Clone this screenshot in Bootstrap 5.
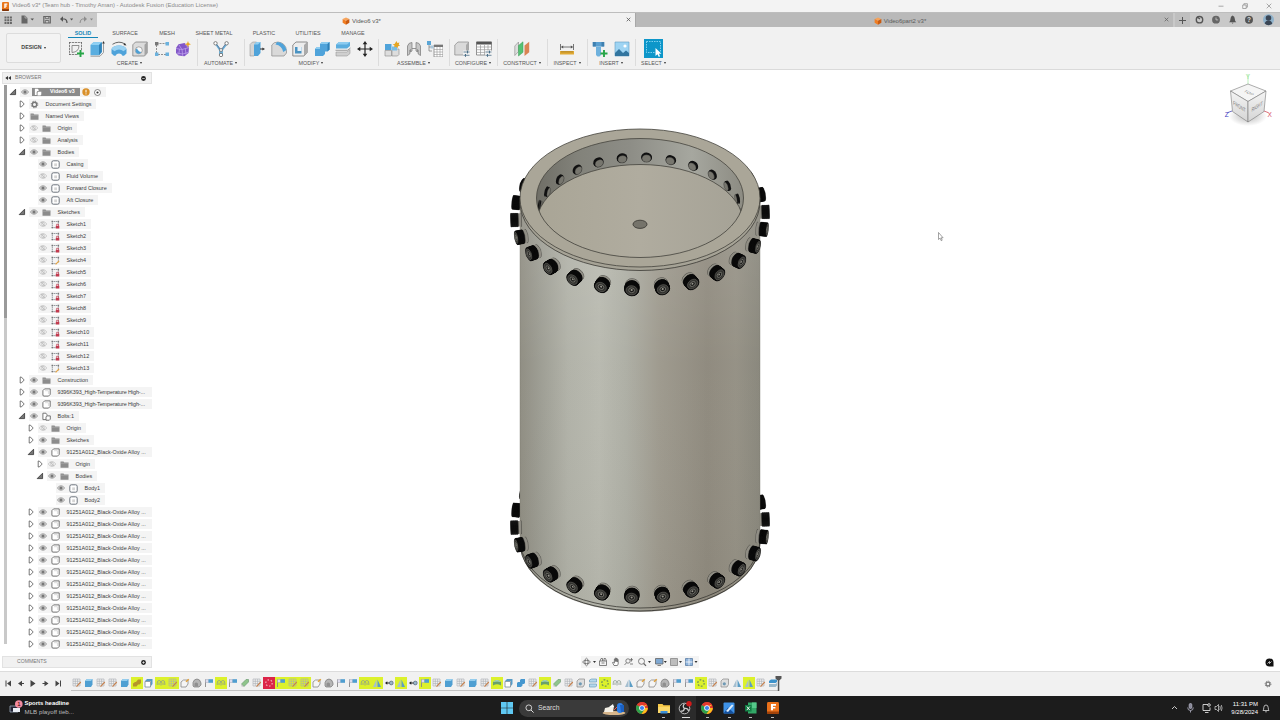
<!DOCTYPE html>
<html lang="en">
<head>
  <meta charset="utf-8">
  <title>Video6 v3* (Team hub - Timothy Aman) - Autodesk Fusion</title>
  <meta name="viewport" content="width=device-width, initial-scale=1">
  <link href="https://cdn.jsdelivr.net/npm/bootstrap@5.3.3/dist/css/bootstrap.min.css" rel="stylesheet">
  <style>
    body { width: 1280px; height: 720px; overflow: hidden; font-family: "Liberation Sans", Arial, sans-serif; font-size: 5.45px; line-height: 1; color: #3c3c3c; background: #fff; }
    svg { display: block; flex: none; }
    .titlebar { height: 12px; background: #f3f3f3; color: #8a8a8a; font-size: 5.93px; padding-left: 2px; }
    .title-text { margin-left: 3px; white-space: nowrap; }
    .win-btns { width: 70px; }
    .tabrow { height: 15px; border-top: 1px solid #bdbdbd; background: #c9c9c9; }
    .quick { width: 97px; background: #c9c9c9; }
    .doc-tab { position: relative; font-size: 6px; color: #555; padding-right: 9px; padding-top: 1px; }
    .doc-active { width: 538px; background: #f1f1f1; }
    .doc-idle { width: 538px; background: #b9b9b9; color: #5c5c5c; border-left: 1px solid #a8a8a8; }
    .doc-label { margin-left: -2px; }
    .doc-close { position: absolute; right: 4px; top: 4px; }
    .plus-btn { width: 15px; background: #bfbfbf; margin-left: 2px; }
    .ribbon { height: 43px; background: #f1f1f1; border-bottom: 1px solid #dadada; }
    .design-col { width: 66px; padding: 6px 5px 6px 6px; }
    .design-btn { border: 1px solid #dcdcdc; border-radius: 2px; font-size: 5.3px; font-weight: bold; color: #444; background: #f3f3f3; }
    .ribbon-tabs { height: 11px; font-size: 5.4px; padding-left: 2px; color: #555; }
    .ribbon-tabs span { text-align: center; padding-top: 4px; white-space: nowrap; }
    .ribbon-tabs .on { color: #1486b8; font-weight: bold; border-bottom: 1px solid #1486b8; }
    .tool-group { position: relative; padding-top: 1px; }
    .tool-group + .tool-group::before { content: ""; position: absolute; left: 0; top: 1px; height: 27px; border-left: 1px solid #dcdcdc; }
    .tool-icons { height: 19px; }
    .tool-icons svg { width: 16px; height: 16px; margin: 0 2.75px; }
    .tool-name { font-size: 5.35px; text-align: center; color: #555; padding-top: 3px; white-space: nowrap; }
    .caret { display: inline-block; border: 1.4px solid transparent; border-top: 2px solid #333; border-bottom: 0; margin-left: 2px; vertical-align: 1px; }
    .select-on { background: #0d96c9; width: 19px; height: 19px; }
    .tool-icons .select-on svg { margin: 0; width: 19px; height: 19px; }
    .viewport { height: 601px; }
    .scene { width: 1280px; height: 601px; }
    .browser { position: absolute; left: 2px; top: 2px; width: 150px; }
    .panel-head { height: 12px; background: #f1f1f1; border: 1px solid #e2e2e2; color: #777; font-size: 5.1px; padding: 0 5px 0 2px; }
    .tree-scroll { width: 3px; height: 559px; margin: 1px 2px 0 2px; background: linear-gradient(#9a9a9a 233px, #c9c9c9 233px); }
    .tree { width: 143px; padding-top: 2px; }
    .tree-row { height: 12px; }
    .tree-row .tw { width: 8px; }
    .row-body { height: 10px; background: #f4f4f4; padding: 1px 5px 0 1px; margin-left: 3px; white-space: nowrap; }
    .row-body svg { margin: -1px 4px 0 0; }
    .row-body.wide { width: 100%; padding-right: 0; }
    .row-label { margin-left: 2.5px; }
    .long-name { letter-spacing: -.09px; }
    .root-pill { background: #8b8b8b; color: #fff; height: 8px; padding: 0 5px 0 2px; margin: -1px 2px 0 -1px; font-weight: bold; font-size: 5.3px; }
    .comments { position: absolute; left: 2px; top: 586px; width: 150px; }
    .viewtools { position: absolute; left: 581px; top: 586px; width: 118px; height: 12px; background: #f4f4f4; }
    .chat-dot { position: absolute; left: 1265px; top: 588px; }
    .timeline { height: 25px; background: #f1f1f1; border-top: 1px solid #dcdcdc; }
    .play-btns { width: 71px; padding-left: 3px; }
    .feature { width: 12px; height: 12px; padding: 1px; }
    .feature.hl { background: #dcf12c; }
    .feature.err { background: #dc2448; }
    .history { border-bottom: 1px solid #c2c2c2; height: 14px; margin-top: 1px; }
    .end-mark { margin-left: -4px; }
    .taskbar { height: 24px; background: #1c1c1c; color: #fff; }
    .widget { width: 501px; padding-left: 8px; }
    .widget-head { font-size: 5.95px; font-weight: bold; margin-bottom: 2px; }
    .widget-sub { font-size: 6.2px; color: #bbb; }
    .search-pill { width: 110px; height: 17px; border-radius: 9px; background: #3a3a3a; margin-left: 6px; padding: 0 3px 0 6px; font-size: 6.8px; color: #ddd; }
    .app { width: 21.8px; height: 24px; position: relative; }
    .app.run::after { content: ""; position: absolute; bottom: 2px; left: 9.5px; width: 3px; height: 1px; background: #bbb; }
    .app.cur { background: #2b2b2b; }
    .app.cur::after { content: ""; position: absolute; bottom: 2px; left: 7px; width: 8px; height: 1.3px; background: #ddd; }
    .clock { font-size: 6px; line-height: 8.5px; text-align: right; width: 30px; }
  </style>
</head>
<body>
  <!-- icon sprite -->
  <svg width="0" height="0" style="display:none">
    <defs>
      <symbol id="i-eye" viewBox="0 0 8 6"><path d="M.3 3Q4-1.600 7.700 3 4 7.600.3 3z" fill="#d5d5d5" stroke="#8a8a8a" stroke-width=".7"/><circle cx="4" cy="3" r="1.600" fill="#777"/></symbol>
      <symbol id="i-eyeoff" viewBox="0 0 8 6"><path d="M.3 3Q4-1.600 7.700 3 4 7.600.3 3z" fill="#fff" stroke="#aaa" stroke-width=".7"/><circle cx="4" cy="3" r="1.400" fill="none" stroke="#aaa" stroke-width=".6"/><path d="M2 .8l4 4.400" stroke="#aaa" stroke-width=".6"/></symbol>
      <symbol id="i-folder" viewBox="0 0 9 8"><path d="M.5 1h3l.8 1h4.200v5.300h-8z" fill="#8c8c8c"/><path d="M.5 2.700h8" stroke="#bbb" stroke-width=".5"/></symbol>
      <symbol id="i-gear" viewBox="0 0 9 9"><circle cx="4.500" cy="4.500" r="2.200" fill="none" stroke="#777" stroke-width="1.400"/><circle cx="4.500" cy="4.500" r="3.300" fill="none" stroke="#777" stroke-width="1" stroke-dasharray="1.300 1.290"/></symbol>
      <symbol id="i-body" viewBox="0 0 9 9"><rect x=".8" y=".8" width="7.400" height="7.400" rx="1.600" fill="#fff" stroke="#5d6670" stroke-width=".9"/><path d="M3.200 3.400h2.800v2.800H3.200z" fill="#d5d5d5"/></symbol>
      <symbol id="i-comp" viewBox="0 0 9 9"><path d="M.9 2.600L2.600.9h5.600v5.500L6.500 8.100H2Q.9 8.100.9 7z" fill="#fff" stroke="#666" stroke-width=".9"/><path d="M6.400 6V2.700H3" fill="none" stroke="#bbb" stroke-width=".5"/></symbol>
      <symbol id="i-asm" viewBox="0 0 9 9"><path d="M4 7.600H.9V1.200h3l1 1.300v1.200" fill="#fff" stroke="#666" stroke-width=".9"/><path d="M4 4.900l1-1h3.300v3.300l-1 1H4z" fill="#fff" stroke="#666" stroke-width=".9"/></symbol>
      <symbol id="i-asmroot" viewBox="0 0 9 9"><path d="M1 .8h3.200l1 1.200v1.500H4L3 4.500V8H1z" fill="#fff"/><path d="M4 5l.9-.9h3.300v3.300l-.9.900H4z" fill="#fff"/></symbol>
      <symbol id="i-sk" viewBox="0 0 9 9"><path d="M1.300 1v7M1 1.500h6.800M7.400 1.500v5M1.300 7.600h4" stroke="#6b747c" stroke-width=".7" stroke-dasharray="1.400 .5" fill="none"/><path d="M.6.8h1.400v1.400H.6zM6.700.8h1.400v1.400H6.700zM.6 6.900h1.400v1.400H.6z" fill="#777"/></symbol>
      <symbol id="i-sklock" viewBox="0 0 9 9"><use href="#i-sk"/><path d="M4.800 5.800h3.500v2.700H4.800z" fill="#c23a4e"/><path d="M5.600 5.800V4.300h1.900v1.500" fill="none" stroke="#c23a4e" stroke-width=".7"/></symbol>
      <symbol id="i-skpen" viewBox="0 0 9 9"><use href="#i-sk"/><path d="M4.600 8.400l3.500-3.500" stroke="#e6a23c" stroke-width="1.200"/></symbol>
      <symbol id="i-open" viewBox="0 0 8 8"><path d="M1.200 6.600L6.600 1.200v5.400z" fill="#777" stroke="#333" stroke-width=".8"/></symbol>
      <symbol id="i-closed" viewBox="0 0 8 8"><path d="M2.200 1h1.100L6.200 4 3.300 7H2.200z" fill="#fff" stroke="#555" stroke-width=".8"/></symbol>
      <symbol id="i-cube" viewBox="0 0 10 10"><path d="M5 .6L9.200 2.600 5 4.800.8 2.600z" fill="#f7a35a"/><path d="M.8 2.600L5 4.800v4.800L.8 7.200z" fill="#ef7d22"/><path d="M9.200 2.600L5 4.800v4.800l4.200-2.400z" fill="#c95a10"/></symbol>
      <symbol id="i-fusion" viewBox="0 0 10 10"><rect width="10" height="10" rx="1.200" fill="#e9701a"/><path d="M3.300 6.800V1.600h4.200v1.500H5v1h2v1.400H5v1.300z" fill="#fff"/><path d="M0 8h10v1q0 1-1 1H1q-1 0-1-1z" fill="#a1430a"/></symbol>

      <!-- ribbon tools -->
      <symbol id="t-sketch" viewBox="0 0 16 16"><path d="M1.500 1v13M1 1.500h13M13.500 1v8M1 13.500h9" stroke="#666" stroke-width=".8" stroke-dasharray="2.200 .7" fill="none"/><path d="M4 11.500V4.500h7Q11 11 4 11.500z" fill="none" stroke="#666" stroke-width=".7"/><path d="M12.500 9v7M9 12.500h7" stroke="#27a547" stroke-width="1.900"/></symbol>
      <symbol id="t-extrude" viewBox="0 0 16 16"><path d="M1.500 4l3-2.800h8.300v9.800l-2.800 3.300H1.500z" fill="#5aaee0"/><path d="M1.500 4l3-2.800h8.300L10 4z" fill="#8fd0f3"/><path d="M10 4l2.800-2.800V11L10 14.300z" fill="#2f82b8"/><path d="M1.500 15.200H11l3.500-3.700V1.500" fill="none" stroke="#888" stroke-width=".8"/><path d="M14.500 0l1.300 2.600h-2.600z" fill="#333"/></symbol>
      <symbol id="t-revolve" viewBox="0 0 16 16"><path d="M.5 8Q2 4.400 8 4.400T15.500 8v4.500l-2.500 2.300h-1.500Q10.500 12.500 8 12.500T4.500 14.800H3L.5 12.500z" fill="#4fa3da"/><path d="M.5 8Q2 4.400 8 4.400T15.500 8l-3 2.300Q10.500 8.500 8 8.500t-4.500 1.800z" fill="#9bd2f2"/><path d="M1.500 3.300Q8-.8 14 3" fill="none" stroke="#555" stroke-width=".9"/><path d="M15.400 4.500l-3-.4 1.500-2z" fill="#333"/></symbol>
      <symbol id="t-hole" viewBox="0 0 16 16"><path d="M.8 3.800L3.500 1h11.700v11l-2.700 3H.8z" fill="#dcdcdc" stroke="#777" stroke-width=".7"/><path d="M12.500 3.800L15.200 1v11l-2.700 3z" fill="#a3a3a3"/><circle cx="6.800" cy="9.300" r="3.500" fill="#fafafa" stroke="#777" stroke-width=".6"/><path d="M5 7.200a3 3 0 1 0 4.300 3.800Q6 10.500 5 7.200z" fill="#4c9fd4"/></symbol>
      <symbol id="t-pattern" viewBox="0 0 16 16"><path d="M2.500 2.500h11M2.500 4v10M4 13.500h8" stroke="#777" stroke-width=".8" stroke-dasharray="2 1"/><path d="M1 1h3.400v3.400H1z" fill="#777"/><path d="M11.500 1H15v3.400h-3.500zM1 11.500h3.400V15H1zM11.500 11.500H15V15h-3.500z" fill="#6bb2de"/></symbol>
      <symbol id="t-form" viewBox="0 0 16 16"><path d="M1 7L3.500 3.200 9.500 2l4.500 3.800-.5 6.200-4 3.300-6-.8L1 12z" fill="#8257c8"/><path d="M1 7.500l6 1 6.500-1.800M7 8.500l.8 6.800M4 4l3 4.500M10 3l3.500 4M2 12l5.500 1 5.500-1.500M4.500 8l-.7 5.500M10.300 7.500l.7 6" stroke="#c3a8ef" stroke-width=".7" fill="none"/><path d="M13 0l.8 2.300 2.200.9-2.200.8L13 6.400l-.9-2.400-2.300-.8 2.300-.9z" fill="#eaa824"/></symbol>
      <symbol id="t-auto" viewBox="0 0 16 16"><path d="M3 3l4 6v5M13.500 3L9 9v5" stroke="#69aed6" stroke-width="1.900" fill="none"/><path d="M4 4l4 5 4.500-6" fill="none" stroke="#557" stroke-width=".6"/><circle cx="2.500" cy="2.300" r="1.700" fill="#fff" stroke="#666" stroke-width=".8"/><circle cx="13.600" cy="2.300" r="1.700" fill="#fff" stroke="#666" stroke-width=".8"/><circle cx="8" cy="9" r="1.500" fill="#fff" stroke="#666" stroke-width=".7"/><circle cx="8" cy="14" r="1.700" fill="#fff" stroke="#666" stroke-width=".8"/></symbol>
      <symbol id="t-press" viewBox="0 0 16 16"><path d="M1 3.500L3.500 1h4v11L5 15H1z" fill="#d4d4d4" stroke="#888" stroke-width=".5"/><path d="M5 3.500L7.500 1h4v11L9 15H5z" fill="#4fa3da"/><path d="M5 3.500L7.500 1h4L9 3.500z" fill="#93cff1"/><path d="M11 8h3" stroke="#333" stroke-width="1"/><path d="M16 8l-2.600-1.500v3z" fill="#333"/></symbol>
      <symbol id="t-fillet" viewBox="0 0 16 16"><path d="M.8 15V4Q2.500 1 7 1q8 1 8.500 9v2l-2.500 3z" fill="#d9d9d9" stroke="#888" stroke-width=".7"/><path d="M6 1Q13 1 15.500 9l-3.300 2Q11 4.500 4.500 3.500z" fill="#4fa3da"/></symbol>
      <symbol id="t-shell" viewBox="0 0 16 16"><path d="M.8 4L4 1h11.200v10.500L12 15H.8z" fill="#ececec" stroke="#777" stroke-width=".8"/><path d="M12 4l3.200-3v10.500L12 15z" fill="#aaa"/><path d="M3 6h6.500v6.500H3z" fill="#4a93c2"/><path d="M5.500 6h4v4h-4z" fill="#e6f1f8"/></symbol>
      <symbol id="t-combine" viewBox="0 0 16 16"><path d="M6 3l2-2h7.500v7.500l-2 2H11v2.500L9 15H1V8l2-2h3z" fill="#4fa3da"/><path d="M6 3l2-2h7.500l-2 2zM1 8l2-2h3v2z" fill="#8dccf0"/><path d="M13.500 3l2-2v7.500l-2 2z" fill="#2c80b7"/></symbol>
      <symbol id="t-split" viewBox="0 0 16 16"><path d="M1 3.500L4 1h11v4l-3 2.500H1z" fill="#5badde"/><path d="M1 3.500L4 1h11l-3 2.500z" fill="#8dccf0"/><path d="M.5 9.300h12L15.500 7" stroke="#888" stroke-width=".8" fill="none"/><path d="M1 11h11l3-2.500v4L12 15H1z" fill="#cfcfcf" stroke="#888" stroke-width=".5"/></symbol>
      <symbol id="t-move" viewBox="0 0 16 16"><path d="M8 2v12M2 8h12" stroke="#222" stroke-width="1.200"/><path d="M8 0l2.300 3.300H5.700zM8 16l2.300-3.300H5.700zM0 8l3.300-2.300v4.600zM16 8l-3.300-2.300v4.600z" fill="#222"/></symbol>
      <symbol id="t-newcomp" viewBox="0 0 16 16"><path d="M1 3h6.500v6H1z" fill="#4fa3da"/><path d="M1 9.500h6.500V15H1zM8 9.500L9.500 8H15v5.500L13.500 15H8z" fill="#ddd" stroke="#888" stroke-width=".6"/><path d="M8 5.500h5v4H8z" fill="#77bde6"/><path d="M12.500 0l.9 2 2-.6-.7 2 1.300 1.400-2 .4-.5 2-1.500-1.400-1.800.8.300-2.200L8.600 3.200l2-.3z" fill="#e6a522"/></symbol>
      <symbol id="t-joint" viewBox="0 0 16 16"><path d="M1.500 14.500V5Q2.500 1.500 6 1.500V10l-1.500 1V8.500L3.800 9v4zM14.500 14.500V5Q13.500 1.500 10 1.500V10l1.500 1V8.500l.7.500v4z" fill="#c6c6c6" stroke="#777" stroke-width=".7"/><path d="M6 7.500h4" stroke="#888" stroke-width=".9"/></symbol>
      <symbol id="t-bom" viewBox="0 0 16 16"><path d="M0 0h4v4H0z" fill="#5ba6d6"/><path d="M2 4v6h3M2 6h3" stroke="#777" stroke-width=".7" fill="none"/><path d="M7 4h9v12H7z" fill="#fff" stroke="#777" stroke-width=".7"/><path d="M7 4h9v2H7z" fill="#777"/><path d="M7 8.500h9M7 11h9M7 13.500h9M10 6v10M13 6v10" stroke="#999" stroke-width=".6"/><path d="M3.500 4.500h3v3h-3z" fill="#aac7da"/></symbol>
      <symbol id="t-config" viewBox="0 0 16 16"><path d="M.8 14V4L4 1h10.500v9L12 14z" fill="#dadada" stroke="#888" stroke-width=".7"/><path d="M12 4l2.500-3v9L12 13z" fill="#aaa"/><path d="M9 9.500h7V16H9z" fill="#f1f1f1"/><path d="M9.500 11h6M9.500 14.300h6" stroke="#4b6f88" stroke-width=".8"/><path d="M13.500 9.600v2.800M11.500 13v2.800" stroke="#4b6f88" stroke-width="1"/></symbol>
      <symbol id="t-table" viewBox="0 0 16 16"><path d="M.5 1h15v13H.5z" fill="#fff" stroke="#777" stroke-width=".8"/><path d="M.5.7h15v2.800H.5z" fill="#555"/><path d="M.5 6h15M.5 8.700h15M.5 11.400h15M4.500 4v10M8.500 4v10M12 4v10" stroke="#999" stroke-width=".7"/><path d="M9 9.500h7V16H9z" fill="#f1f1f1"/><path d="M9.500 11h6M9.500 14.300h6" stroke="#4b6f88" stroke-width=".8"/><path d="M13.500 9.600v2.800M11.500 13v2.800" stroke="#4b6f88" stroke-width="1"/></symbol>
      <symbol id="t-plane" viewBox="0 0 16 16"><path d="M.8 14.500V5L4.500 1v9.500z" fill="#ddd" stroke="#888" stroke-width=".6"/><path d="M4.500 15V4.500L9 .8v10.500z" fill="#55c274" stroke="#389a55" stroke-width=".5"/><path d="M10.500 15V4.500L15.200.8v10.500z" fill="#d98454"/></symbol>
      <symbol id="t-measure" viewBox="0 0 16 16"><path d="M1.500 3v6M14.500 3v6" stroke="#555" stroke-width=".8"/><path d="M3 6h10" stroke="#555" stroke-width=".8"/><path d="M1.700 6l2.500-1.500v3zM14.300 6l-2.500-1.500v3z" fill="#555"/><path d="M1 10h14v3.500H1z" fill="#e0aa35"/><path d="M3 10v1.600M5 10v1.600M7 10v1.600M9 10v1.600M11 10v1.600M13 10v1.600" stroke="#84601a" stroke-width=".6"/></symbol>
      <symbol id="t-bolt" viewBox="0 0 16 16"><path d="M.8 1h11.400v4.500H.8z" fill="#5a9fd0"/><path d="M4 5.500h5V14l-1.500 1.500h-2L4 14z" fill="#6fb1dd"/><path d="M.8 1h3v4.500h-3zM9.500 1h2.700v4.500H9.500z" fill="#3f80b0"/><path d="M12 9v7M8.500 12.500h7" stroke="#27a547" stroke-width="1.900"/></symbol>
      <symbol id="t-image" viewBox="0 0 16 16"><path d="M1 1h14v14H1z" fill="#9ed4f3" stroke="#5f9cc4" stroke-width=".6"/><circle cx="11" cy="5" r="1.600" fill="#fff"/><path d="M1 12l4-4 4 4 3-2.500 3 2.500v3H1z" fill="#32759f"/></symbol>
      <symbol id="t-select" viewBox="0 0 19 19"><path d="M2.500 2.500h14v10M2.500 2.500v11h8" stroke="#aeeaff" stroke-width=".7" stroke-dasharray="1.500 1" fill="none"/><path d="M11.500 9v8l2-1.700 1.300 2.700 1.300-.7-1.200-2.600h2.600z" fill="#fff"/></symbol>

      <!-- timeline features -->
      <symbol id="f-sketch" viewBox="0 0 10 10"><path d="M1 1h7v7H1zM1 3.300h7M1 5.600h7M3.300 1v7M5.600 1v7" fill="none" stroke="#a7adb2" stroke-width=".6"/><path d="M4.500 8.600L8.800 4" stroke="#c8824e" stroke-width="1.100"/></symbol>
      <symbol id="f-extrude" viewBox="0 0 10 10"><path d="M1 3l2-2h5.500v5.500L7 9H1z" fill="#4f9fd2"/><path d="M1 3l2-2h5.500L7 3z" fill="#94cdee"/></symbol>
      <symbol id="f-olive" viewBox="0 0 10 10"><path d="M1 5.500l2-1.500h1L6 1.500h3V5L7.500 6.500H6L4.500 8.500H1z" fill="#b6952b"/></symbol>
      <symbol id="f-shell" viewBox="0 0 10 10"><path d="M1 3.500h5.500V9H1z" fill="#fff" stroke="#789" stroke-width=".8"/><path d="M1 3l2-2h5.500v5L7 8V3z" fill="#569bc7"/></symbol>
      <symbol id="f-ring" viewBox="0 0 10 10"><path d="M1.200 7V5q0-2.500 1.900-2.500T5 5v2.500M5 5q0-2.500 1.900-2.500T8.800 5v2M3 4.500V7M7 4.500V7" fill="none" stroke="#8a9a90" stroke-width=".8"/></symbol>
      <symbol id="f-fillet" viewBox="0 0 10 10"><path d="M1 9V4l2.500-2H8v4L6 9z" fill="#f5f5f5" stroke="#888" stroke-width=".8"/><path d="M6 3.800L8.800 1.200" stroke="#e0a03a" stroke-width="1.500"/></symbol>
      <symbol id="f-dome" viewBox="0 0 10 10"><path d="M1 8V4.500Q2 1 5 1t4 4v2L7 9H2z" fill="#b5b5b5" stroke="#777" stroke-width=".7"/><path d="M2.500 8.500V5.500q1.500-2 3.500 0v3" fill="#8f8f8f"/></symbol>
      <symbol id="f-plane" viewBox="0 0 10 10"><path d="M1.500 9V1.500" stroke="#888" stroke-width=".9"/><path d="M1.500 1.500h3v3h-3z" fill="#dde" stroke="#99a" stroke-width=".4"/><path d="M4.500 1.200h4.500v3.600H4.500z" fill="#4f9ed0"/></symbol>
      <symbol id="f-pen" viewBox="0 0 10 10"><path d="M1.500 6L6 1.500h2.500V4L4 8.500z" fill="#8fc48b" stroke="#62936a" stroke-width=".6"/><path d="M1.500 6L4 8.500H1.500z" fill="#bbb"/></symbol>
      <symbol id="f-pattern" viewBox="0 0 10 10"><circle cx="5" cy="5" r="3.200" fill="none" stroke="#7d9d55" stroke-width="1.400" stroke-dasharray="1.800 1.500"/></symbol>
      <symbol id="f-patred" viewBox="0 0 10 10"><circle cx="5" cy="5" r="3.200" fill="none" stroke="#f3a7b5" stroke-width="1.200" stroke-dasharray="1.500 1.800"/></symbol>
      <symbol id="f-mirror" viewBox="0 0 10 10"><path d="M4.500 1.500V9H1z" fill="#a5bfd0"/><path d="M5.500 1.500V9H9z" fill="#5c9ec6"/></symbol>
      <symbol id="f-joint" viewBox="0 0 10 10"><path d="M2 5h4" stroke="#222" stroke-width="1"/><path d="M1 5l2.300-1.800v3.600z" fill="#222"/><circle cx="7.300" cy="5" r="1.900" fill="#9bb6c9" stroke="#456" stroke-width=".6"/></symbol>
      <symbol id="f-revolve" viewBox="0 0 10 10"><path d="M1 4q4-4 8 0v3.500Q5 5 1 7.500z" fill="#6aa06b"/><path d="M1 4q4-4 8 0-4-1-8 0z" fill="#a7d6c0"/></symbol>
      <symbol id="f-combine" viewBox="0 0 10 10"><path d="M4 2l1-1h4v4L8 6H6.500v1.500L5 9H1V5l1-1h2z" fill="#4597cf"/></symbol>
      <symbol id="f-hole" viewBox="0 0 10 10"><path d="M1 3l2-2h5.500v5.500L7 9H1z" fill="#dedede" stroke="#888" stroke-width=".7"/><circle cx="4.300" cy="5.800" r="1.600" fill="#6f9ab5"/></symbol>
      <symbol id="f-split" viewBox="0 0 10 10"><path d="M1.500 2l2-1h5v3h-7zM1.500 6h7v2l-1 1h-6z" fill="#b5d8ec" stroke="#6a9dbb" stroke-width=".7"/></symbol>
      <symbol id="f-stack" viewBox="0 0 10 10"><path d="M1 3l2-1.500h6V4L7.500 5H1z" fill="#3e93cb"/><path d="M1 6h6.500L9 5v2.500L7.500 9H1z" fill="#9bb9cb"/></symbol>

      <!-- task bar -->
      <symbol id="a-chrome" viewBox="0 0 12 12"><circle cx="6" cy="6" r="6" fill="#e33b2e"/><path d="M6 6L.8 3a6 6 0 0 0 4.700 9L8.600 7.500z" fill="#2da14b"/><path d="M6 6h5.800A6 6 0 0 1 5.500 12l3-4.500L8.600 3H11.200" fill="#fbc21a"/><path d="M.9 3A6 6 0 0 1 11.200 3H6z" fill="#e33b2e"/><circle cx="6" cy="6" r="2.800" fill="#fff"/><circle cx="6" cy="6" r="2.100" fill="#3f83ee"/></symbol>
    </defs>
  </svg>

  <div class="d-flex flex-column vh-100">
    <div class="titlebar d-flex align-items-center">
      <svg width="7" height="9" viewBox="0 0 7 9"><rect width="7" height="9" rx="1" fill="#e8751a"/><path d="M2.300 6V1.500h3v1.200H3.600v.8H5v1.100H3.600V6z" fill="#fff"/><path d="M0 7.200h7V8q0 1-1 1H1Q0 9 0 8z" fill="#7d3208"/></svg>
      <span class="title-text">Video6 v3* (Team hub - Timothy Aman) - Autodesk Fusion (Education License)</span>
      <div class="win-btns ms-auto d-flex align-items-center justify-content-between pe-2">
        <svg class="ms-2" width="6" height="6" viewBox="0 0 6 6"><path d="M.5 3.200h5" stroke="#888" stroke-width=".7"/></svg>
        <svg width="6" height="6" viewBox="0 0 6 6"><path d="M.7 2h3.500v3.500H.7zM1.900 2V.7h3.500v3.500H4.200" fill="none" stroke="#888" stroke-width=".7"/></svg>
        <svg width="6" height="6" viewBox="0 0 6 6"><path d="M.7.7l4.600 4.600M5.300.7L.7 5.300" stroke="#888" stroke-width=".7"/></svg>
      </div>
    </div>

    <div class="tabrow d-flex">
      <div class="quick">
        <svg width="97" height="14" viewBox="0 13 97 14">
          <path d="M4.500 16.500h2v2h-2zM7.200 16.500h2v2h-2zM9.900 16.500h2v2h-2zM4.500 19.200h2v2h-2zM7.200 19.200h2v2h-2zM9.900 19.200h2v2h-2zM4.500 21.900h2v2h-2zM7.200 21.900h2v2h-2zM9.900 21.900h2v2h-2z" fill="#666"/>
          <path d="M21.500 15.500h3.500l2.500 2.500V23.500h-6z" fill="#666"/><path d="M25 15.500v2.500h2.500" stroke="#ccc" stroke-width=".6" fill="none"/>
          <path d="M30.500 18.500h3.500l-1.700 2zM70 18.500h3.200l-1.600 2z" fill="#555"/><path d="M90 18.500h3l-1.500 2z" fill="#888"/>
          <path d="M43.800 16.500h6.500V23h-6.500z" fill="none" stroke="#666" stroke-width="1.200"/><path d="M45.300 16.500v2.200h3.500v-2.200M45.300 23v-2.500h3.500V23" fill="none" stroke="#666" stroke-width=".9"/>
          <path d="M61.500 19h3q2.500.5 2.500 4" fill="none" stroke="#555" stroke-width="1.200"/><path d="M60 19l3-2.800v5.600z" fill="#555"/>
          <path d="M85 19h-2.500q-2.500.5-2.500 4" fill="none" stroke="#8d8d8d" stroke-width="1"/><path d="M87 19l-3-2.800v5.600z" fill="#8d8d8d"/>
        </svg>
      </div>
      <div class="doc-tab doc-active d-flex align-items-center justify-content-center">
        <svg class="me-1" width="8" height="8"><use href="#i-cube"/></svg><span class="doc-label">Video6 v3*</span>
        <svg class="doc-close" width="5" height="5" viewBox="0 0 5 5"><path d="M.7.7l3.600 3.600M4.300.7L.7 4.300" stroke="#555" stroke-width=".8"/></svg>
      </div>
      <div class="doc-tab doc-idle d-flex align-items-center justify-content-center">
        <svg class="me-1" width="8" height="8"><use href="#i-cube"/></svg><span class="doc-label">Video6part2 v3*</span>
        <svg class="doc-close" width="5" height="5" viewBox="0 0 5 5"><path d="M.7.7l3.600 3.600M4.300.7L.7 4.300" stroke="#666" stroke-width=".8"/></svg>
      </div>
      <div class="plus-btn d-flex align-items-center justify-content-center">
        <svg width="7" height="7" viewBox="0 0 7 7"><path d="M3.500 0v7M0 3.500h7" stroke="#555" stroke-width="1"/></svg>
      </div>
      <svg width="88" height="14" viewBox="1190 13 88 14">
        <circle cx="1199.500" cy="19.700" r="3.200" fill="none" stroke="#555" stroke-width="1.400"/><path d="M1197 17l3 2" stroke="#555" stroke-width="1.300"/>
        <circle cx="1216" cy="19.700" r="3.900" fill="#666"/><path d="M1216 17.500v2.400h2.200" stroke="#ccc" stroke-width=".8" fill="none"/>
        <path d="M1229 22.200q1.500-1 1.500-3.500t2-3.200q2.300.7 2.300 3.200t1.500 3.500zM1231.600 22.800h2l-1 1z" fill="#555"/>
        <circle cx="1249" cy="19.700" r="4" fill="#555"/><text x="1249" y="22.100" font-size="6.500" font-weight="bold" fill="#ddd" text-anchor="middle">?</text>
        <circle cx="1268.500" cy="19.700" r="5.500" fill="#8fb2cb"/><circle cx="1268.500" cy="18" r="2.800" fill="#3a4655"/><path d="M1264.700 23.500q.8-3 3.800-3t3.800 3q-1.500 1.700-3.800 1.700t-3.800-1.700z" fill="#3a4655"/>
      </svg>
    </div>

    <div class="ribbon d-flex">
      <div class="design-col"><div class="design-btn h-100 d-flex align-items-center justify-content-center">DESIGN<span class="caret"></span></div></div>
      <div class="flex-grow-1">
        <div class="ribbon-tabs d-flex" id="ribbonTabs"></div>
        <div class="d-flex" id="ribbonGroups"></div>
      </div>
    </div>

    <div class="viewport position-relative">
      <svg class="scene" id="scene" viewBox="0 70 1280 601">
        <defs>
          <linearGradient id="wall"><stop offset="0" stop-color="#8e8c81"/><stop offset=".08" stop-color="#9b9b91"/><stop offset=".2" stop-color="#b0b1a7"/><stop offset=".33" stop-color="#b8b9af"/><stop offset=".44" stop-color="#adaea4"/><stop offset=".58" stop-color="#9d998d"/><stop offset=".78" stop-color="#8e897d"/><stop offset=".9" stop-color="#949084"/><stop offset="1" stop-color="#88867b"/></linearGradient>
          <linearGradient id="shade" x1="0" y1="0" x2="0" y2="1"><stop offset="0" stop-color="#fff" stop-opacity=".12"/><stop offset=".4" stop-color="#fff" stop-opacity=".02"/><stop offset="1" stop-color="#5a5548" stop-opacity=".06"/></linearGradient>
          <linearGradient id="bore"><stop offset="0" stop-color="#6f6e66"/><stop offset=".2" stop-color="#82827a"/><stop offset=".45" stop-color="#8d8d86"/><stop offset=".75" stop-color="#a6a79f"/><stop offset="1" stop-color="#8c8b82"/></linearGradient>
          <linearGradient id="floor"><stop offset="0" stop-color="#a9a596"/><stop offset=".5" stop-color="#b0ac9f"/><stop offset="1" stop-color="#a5a296"/></linearGradient>
          <linearGradient id="cubeShade" x1="0" y1="0" x2="0" y2="1"><stop offset="0" stop-color="#f4f4f4"/><stop offset="1" stop-color="#d5d5d5"/></linearGradient>
          <radialGradient id="cubeShadow"><stop offset="0" stop-color="#888" stop-opacity=".6"/><stop offset="1" stop-color="#888" stop-opacity="0"/></radialGradient>
          <clipPath id="mouth"><ellipse cx="640" cy="198" rx="103.500" ry="59.500"/></clipPath>
        </defs>
        <g id="backBolts"></g>
        <path d="M520 198V542.500A120 69 0 0 0 760 542.500V198z" fill="url(#wall)" stroke="#77756c" stroke-width=".4"/>
        <path d="M520 198V542.500A120 69 0 0 0 760 542.500V198z" fill="url(#shade)"/>
        <path d="M520 542A120 69 0 0 0 760 542" fill="none" stroke="#3a3934" stroke-width=".9"/>
        <path d="M520 539A120 69 0 0 0 760 539" fill="none" stroke="#3a3934" stroke-width=".8"/>
        <path d="M520 198V201.500A120 69 0 0 0 760 201.500V198z" fill="#a6a396"/>
        <path d="M520 201.500A120 69 0 0 0 760 201.500" fill="none" stroke="#3a3934" stroke-width=".8"/>
        <ellipse cx="640" cy="198" rx="120" ry="69" fill="#aaa698" stroke="#44423c" stroke-width=".8"/>
        <g clip-path="url(#mouth)">
          <rect x="536" y="138" width="208" height="120" fill="url(#bore)"/>
          <g id="innerBolts"></g>
          <ellipse cx="640" cy="224" rx="103.500" ry="59.500" fill="url(#floor)" stroke="#44423c" stroke-width=".8"/>
        </g>
        <ellipse cx="640" cy="198" rx="103.500" ry="59.500" fill="none" stroke="#44423c" stroke-width=".8"/>
        <ellipse cx="640" cy="224.300" rx="7" ry="4.100" fill="#75736a" stroke="#33322d" stroke-width=".8"/>
        <g id="frontBolts"></g>

        <!-- view cube -->
        <ellipse cx="1248" cy="116" rx="19" ry="10" fill="url(#cubeShadow)"/>
        <path d="M1248 74v10" stroke="#a5e8a5" stroke-width=".7"/>
        <path d="M1232 111l-4 1.500" stroke="#4a4ab5" stroke-width=".8"/><path d="M1264 111l4 1.500" stroke="#d05060" stroke-width=".8"/>
        <path d="M1248 84l18 7-18 10.500L1230.500 91z" fill="#f5f5f5" stroke="#777" stroke-width=".6"/>
        <path d="M1230.500 91l17.500 10.500V122l-15.500-10.500z" fill="url(#cubeShade)" stroke="#777" stroke-width=".6"/>
        <path d="M1266 91l-18 10.500V122l16-10.500z" fill="url(#cubeShade)" stroke="#777" stroke-width=".6"/>
        <g font-size="5.300" fill="#777" text-anchor="middle">
          <text transform="matrix(.8 .35 -.7 .4 1247.500 93.500)">TOP</text>
          <text transform="matrix(.68 .44 .06 1.100 1239.500 108.500)">FRONT</text>
          <text transform="matrix(.68 -.44 -.06 1.100 1257 108.500)">RIGHT</text>
        </g>
        <g font-size="6.500" text-anchor="middle"><text x="1248" y="79" fill="#9be69b">Y</text><text x="1226.700" y="116.500" fill="#3c3cc0">Z</text><text x="1269.600" y="116.500" fill="#d64a5a">X</text></g>
        <path d="M938.500 232.500v7l1.600-1.400 1.100 2.600 1-.5-1.100-2.400h2z" fill="#fff" stroke="#666" stroke-width=".6"/>
      </svg>

      <div class="browser">
        <div class="panel-head d-flex align-items-center justify-content-between">
          <span class="d-flex align-items-center"><svg class="me-1" width="6" height="4" viewBox="0 0 6 4"><path d="M3 0v4L.3 2zM6 0v4L3.300 2z" fill="#333"/></svg>BROWSER</span>
          <svg width="5" height="5" viewBox="0 0 5 5"><circle cx="2.500" cy="2.500" r="2.400" fill="#222"/><path d="M1.200 2.500h2.600" stroke="#fff" stroke-width=".6"/></svg>
        </div>
        <div class="d-flex">
          <div class="tree-scroll"></div>
          <div class="tree" id="tree"></div>
        </div>
      </div>

      <div class="comments">
        <div class="panel-head d-flex align-items-center justify-content-between">
          <span class="ms-2 ps-1">COMMENTS</span>
          <svg width="5" height="5" viewBox="0 0 5 5"><circle cx="2.500" cy="2.500" r="2.400" fill="#222"/><path d="M1.200 2.500h2.600M2.500 1.200v2.600" stroke="#fff" stroke-width=".6"/></svg>
        </div>
      </div>

      <div class="viewtools">
        <svg width="118" height="12" viewBox="581 656 118 12" fill="none" stroke="#666" stroke-width=".8">
          <ellipse cx="586.500" cy="662" rx="3.800" ry="1.600"/><ellipse cx="586.500" cy="662" rx="1.600" ry="3.800"/>
          <path d="M599.500 661h7v4.500h-7zM600 661l1-2.500h1.500v2.500M604 661v-2.500h1.500l1 2.500M601.500 663h3"/>
          <path d="M614 665.500l-1.500-3 1-.3.900 1V659h.9v2.500V658h1v3.500V658.500h1V662v-2.500h.9V664l-.8 1.500z" fill="#fff"/>
          <circle cx="628" cy="661" r="2.200"/><path d="M626.500 662.800l-2 2.200M631.500 658v3.500M630 659.700h3M630 664h3"/>
          <circle cx="641.500" cy="661.300" r="3"/><path d="M643.700 663.500l2.300 2.300" stroke-width="1.200"/>
          <path d="M655.500 658.500h7.500v5.500h-7.500z" fill="#7fa8d2"/><path d="M657.500 665.500h3.500"/>
          <path d="M670.500 658.500h7v7h-7z" fill="#bdbdbd" stroke="#888"/>
          <path d="M685.500 658.500h7v7h-7z" fill="#8fb4dc" stroke="#5d7fa5"/><path d="M689 658.500v7M685.500 662h7" stroke="#fff"/>
          <path d="M593 661h3l-1.500 2zM648 661h3l-1.500 2zM663.800 661h3l-1.500 2zM679 661h3l-1.500 2zM694.500 661h3l-1.500 2z" fill="#333" stroke="none"/>
        </svg>
      </div>
      <svg class="chat-dot" width="9" height="9" viewBox="0 0 9 9"><path d="M4.500.5a4 4 0 0 1 4 4v4h-4a4 4 0 0 1 0-8z" fill="#111"/><path d="M2.500 5.500l2-2v2l2-2" stroke="#fff" stroke-width=".7" fill="none"/></svg>
    </div>

    <div class="timeline d-flex">
      <div class="play-btns">
        <svg width="65" height="24" viewBox="3 672 65 24" fill="#444">
          <path d="M5.500 680.500h1v6h-1zM11 680.500v6l-4-3zM18 683.500l4-2.800v5.600zM21.500 683h2.500v1.100h-2.500zM30.500 680l5 3.500-5 3.500zM48.500 683.500l-4-2.800v5.600zM45 683h-2.500v1.100H45zM55.500 680.500v6l4-3zM60 680.500h1v6h-1z"/>
        </svg>
      </div>
      <div class="pt-1"><div class="history d-flex" id="history"></div></div>
      <svg class="end-mark" width="7" height="20" viewBox="0 0 7 20"><path d="M.5 4h6v2.500L4.300 8.500V19H2.800V8.500L.5 6.500z" fill="#555"/></svg>
      <svg class="ms-auto mt-2 me-2" width="8" height="8"><use href="#i-gear"/></svg>
    </div>

    <div class="taskbar d-flex align-items-center">
      <div class="widget d-flex align-items-center">
        <svg width="16" height="16" viewBox="0 0 16 16"><path d="M2 6h8v6H2z" fill="#223" stroke="#9ab" stroke-width=".8"/><path d="M5 8h7v4H5z" fill="#e9eef5"/><circle cx="10.800" cy="4" r="3.800" fill="#f28ba0"/><text x="10.800" y="6.200" font-size="6" text-anchor="middle" fill="#300">1</text></svg>
        <div class="ms-0 ps-0"><div class="widget-head">&#8202;Sports headline</div><div class="widget-sub">&#8202;MLB playoff tieb...</div></div>
      </div>
      <svg width="12" height="12" viewBox="0 0 12 12"><path d="M0 0h5.700v5.700H0zM6.300 0H12v5.700H6.300zM0 6.300h5.700V12H0zM6.300 6.300H12V12H6.300z" fill="#5fc8f2"/></svg>
      <div class="search-pill d-flex align-items-center">
        <svg width="9" height="9" viewBox="0 0 9 9"><circle cx="3.800" cy="3.800" r="2.900" fill="none" stroke="#ddd" stroke-width=".9"/><path d="M6 6l2.600 2.600" stroke="#ddd" stroke-width="1"/></svg>
        <span class="ms-1">Search</span>
        <svg class="ms-auto" width="24" height="13" viewBox="0 0 24 13"><ellipse cx="12" cy="11" rx="11.500" ry="2" fill="#d8b78c"/><path d="M3 6l9-2-1 6H2z" fill="#f4f0e6"/><path d="M7 5l4-3 1 3z" fill="#fff"/><path d="M12 8l3-3" stroke="#e25555" stroke-width="1"/><rect x="15" y="1" width="6" height="10" rx="3" fill="#2e7fe8"/><path d="M18 3h4v7h-3z" fill="#1a5fc0"/></svg>
      </div>
      <div class="d-flex" style="padding-left:2px">
        <div class="app d-flex align-items-center justify-content-center"><svg width="12" height="12"><use href="#a-chrome"/></svg></div>
        <div class="app run d-flex align-items-center justify-content-center"><svg width="12" height="11" viewBox="0 0 12 11"><path d="M0 1h4.500l1 1.300H12V10H0z" fill="#f7c948"/><path d="M0 4h12v6H0z" fill="#fbd869"/><path d="M2.500 8h7v2.500h-7z" fill="#3c8fd8"/></svg></div>
        <div class="app cur d-flex align-items-center justify-content-center"><svg width="14" height="14" viewBox="0 0 14 14"><circle cx="6.500" cy="7.500" r="5.300" fill="#222" stroke="#ccc" stroke-width=".9"/><path d="M6.500 7.500Q4 5 6.500 3M6.500 7.500q3.500-.5 4 2.500M6.500 7.500q-1 3.500-4 2.500" fill="none" stroke="#ccc" stroke-width="1.300"/><circle cx="11" cy="2.800" r="2.700" fill="#d11a1a"/></svg></div>
        <div class="app run d-flex align-items-center justify-content-center"><svg width="12" height="12"><use href="#a-chrome"/></svg></div>
        <div class="app run d-flex align-items-center justify-content-center"><svg width="12" height="12" viewBox="0 0 12 12"><rect x=".5" y=".5" width="11" height="11" rx="1" fill="#3f92e6"/><path d="M.5 11.500L5 5.500l6.500 6z" fill="#14509e"/><path d="M3 9l6-6.500 1.500 1L5 10z" fill="#dfeefb"/></svg></div>
        <div class="app run d-flex align-items-center justify-content-center"><svg width="12" height="12" viewBox="0 0 12 12"><path d="M3 .5h8.500v11H3z" fill="#33a867"/><path d="M7 .5h4.500V6H7z" fill="#55c98a"/><path d="M0 3h6.500v6.500H0z" fill="#0f7a41"/><path d="M1.800 4.500l3 3.600M4.800 4.500l-3 3.600" stroke="#fff" stroke-width=".9"/></svg></div>
        <div class="app run d-flex align-items-center justify-content-center"><svg width="12" height="12" viewBox="0 0 10 10"><use href="#i-fusion"/></svg></div>
      </div>
      <div class="ms-auto d-flex align-items-center">
        <svg width="60" height="24" viewBox="1168 696 60 24" fill="none" stroke="#ddd" stroke-width=".9">
          <path d="M1172 709l2.500-2.500 2.500 2.500"/>
          <rect x="1189.200" y="703.500" width="2.600" height="5" rx="1.300" fill="#889" stroke="#aab"/><path d="M1187.700 707.500q0 3 2.800 3t2.800-3M1190.500 710.500v2" stroke="#aab"/>
          <path d="M1203 704.500h5M1203 704.500v6h7v-3M1205 712.500h3.500"/><circle cx="1209" cy="705" r="1.300"/>
          <path d="M1215 706.500h1.500l2-2v7l-2-2H1215zM1219.800 706q1 2 0 4M1221.300 705q1.500 3 0 6" stroke-width=".7"/>
        </svg>
        <div class="clock">11:31 PM<br>9/28/2024</div>
        <svg style="margin:0 10px 0 4px" width="8" height="9" viewBox="0 0 8 9"><path d="M1 6.500q.8-1 .8-3Q2 1 4 1t2.200 2.500q0 2 .8 3zM3.200 7.800h1.600" fill="none" stroke="#ddd" stroke-width=".8"/></svg>
      </div>
    </div>
  </div>

  <script src="https://cdn.jsdelivr.net/npm/bootstrap@5.3.3/dist/js/bootstrap.bundle.min.js"></script>

  <script>
  function icon(id, w, h) {
    return `<svg width="${w}" height="${h}"><use href="#${id}"/></svg>`;
  }

  // ribbon
  const ribbonTabs = [["SOLID", 30], ["SURFACE", 54], ["MESH", 30], ["SHEET METAL", 64], ["PLASTIC", 36], ["UTILITIES", 52], ["MANAGE", 38]];
  document.getElementById("ribbonTabs").innerHTML = ribbonTabs
    .map(([name, w], i) => `<span class="${i === 0 ? "on" : ""}" style="width:${w}px">${name}</span>`).join("");

  const groups = [
    ["CREATE", 131, ["sketch", "extrude", "revolve", "hole", "pattern", "form"], 4],
    ["AUTOMATE", 47, ["auto"], 0],
    ["MODIFY", 134, ["press", "fillet", "shell", "combine", "split", "move"], 0],
    ["ASSEMBLE", 71, ["newcomp", "joint", "bom"], 0],
    ["CONFIGURE", 48, ["config", "table"], 0],
    ["CONSTRUCT", 50, ["plane"], 0],
    ["INSPECT", 40, ["measure"], 0],
    ["INSERT", 48, ["bolt", "image"], 0],
    ["SELECT", 37, ["select"], 0]
  ];
  document.getElementById("ribbonGroups").innerHTML = groups.map(([name, w, tools, pad]) => {
    const icons = tools.map(t => t === "select" ? `<div class="select-on">${icon("t-select", 19, 19)}</div>` : icon("t-" + t, 16, 16)).join("");
    return `<div class="tool-group" style="width:${w}px;padding-right:${pad}px">
      <div class="tool-icons d-flex align-items-center justify-content-center">${icons}</div>
      <div class="tool-name">${name}<span class="caret"></span></div></div>`;
  }).join("");

  // browser tree: [depth, arrow, eye, icon, label]
  const BOLT = "91251A012_Black-Oxide Alloy ...";
  const SEAL = "9396K393_High-Temperature High-...";
  const rows = [
    [1, "c", "", "gear", "Document Settings"],
    [1, "c", "", "folder", "Named Views"],
    [1, "c", "off", "folder", "Origin"],
    [1, "c", "off", "folder", "Analysis"],
    [1, "o", "on", "folder", "Bodies"],
    [2, "", "on", "body", "Casing"],
    [2, "", "off", "body", "Fluid Volume"],
    [2, "", "on", "body", "Forward Closure"],
    [2, "", "on", "body", "Aft Closure"],
    [1, "o", "on", "folder", "Sketches"]
  ];
  for (let i = 1; i <= 13; i++) {
    rows.push([2, "", "off", i === 4 || i === 13 ? "skpen" : "sklock", "Sketch" + i]);
  }
  rows.push(
    [1, "c", "on", "folder", "Construction"],
    [1, "c", "on", "comp", SEAL],
    [1, "c", "on", "comp", SEAL],
    [1, "o", "on", "asm", "Bolts:1"],
    [2, "c", "off", "folder", "Origin"],
    [2, "c", "on", "folder", "Sketches"],
    [2, "o", "on", "comp", BOLT],
    [3, "c", "off", "folder", "Origin"],
    [3, "o", "on", "folder", "Bodies"],
    [4, "", "on", "body", "Body1"],
    [4, "", "on", "body", "Body2"]
  );
  for (let i = 0; i < 12; i++) rows.push([2, "c", "on", "comp", BOLT]);

  const arrows = { o: "i-open", c: "i-closed" };
  let html = `<div class="tree-row d-flex align-items-center"><div class="tw">${icon("i-open", 8, 8)}</div>
    <div class="row-body d-flex align-items-center">${icon("i-eye", 8, 6)}
    <span class="root-pill d-flex align-items-center">${icon("i-asmroot", 8, 8)}<span class="ms-1">Video6 v3</span></span>
    <svg class="me-1" width="8" height="8" viewBox="0 0 8 8"><circle cx="4" cy="4" r="3.700" fill="#d9902a"/><path d="M4 1.800v2.700M4 5.400v1" stroke="#fff" stroke-width="1"/></svg>
    <svg class="me-0" width="7" height="7" viewBox="0 0 7 7"><circle cx="3.500" cy="3.500" r="3" fill="#fff" stroke="#555" stroke-width=".7"/><circle cx="3.500" cy="3.500" r="1.100" fill="#333"/></svg></div></div>`;
  rows.forEach(([depth, arrow, eye, ico, label]) => {
    const wide = label.endsWith("...");
    const eyeSvg = eye ? icon(eye === "on" ? "i-eye" : "i-eyeoff", 8, 6) : "";
    html += `<div class="tree-row d-flex align-items-center" style="padding-left:${depth * 9}px">
      <div class="tw">${arrow ? icon(arrows[arrow], 8, 8) : ""}</div>
      <div class="row-body d-flex align-items-center${wide ? " wide" : ""}">${eyeSvg}${icon("i-" + ico, 9, 9)}<span class="row-label${label === SEAL ? " long-name" : ""}">${label}</span></div></div>`;
  });
  document.getElementById("tree").innerHTML = html;

  // timeline, "!" marks a highlighted feature and "x" a failed one
  const features = ("sketch extrude sketch sketch extrude !olive shell !ring !sketch fillet dome plane !ring plane pen sketch xpatred !plane !sketch !sketch " +
    "fillet dome plane plane !ring !mirror joint !mirror joint !plane sketch extrude sketch extrude sketch !revolve shell combine sketch !revolve " +
    "pen sketch hole split !pattern ring mirror fillet fillet dome plane plane !pattern sketch hole mirror !mirror sketch stack").split(" ");
  document.getElementById("history").innerHTML = features.map(f => {
    const cls = f[0] === "!" ? " hl" : f[0] === "x" ? " err" : "";
    return `<div class="feature${cls}">${icon("f-" + f.replace(/^[!x]/, ""), 10, 10)}</div>`;
  }).join("");

  // bolt circles, angle 0 faces the viewer
  const TILT = 0.575, RISE = 0.818, STEP = 360 / 26;

  function disc(a, cy, dist, r, attrs) {
    const s = Math.sin(a), c = Math.cos(a);
    const m = [c, -TILT * s, 0, RISE, 640 + dist * s, cy + TILT * dist * c].map(v => v.toFixed(3)).join(" ");
    return `<circle r="${r}" transform="matrix(${m})" ${attrs}/>`;
  }

  function bolt(a, cy) {
    let out = disc(a, cy, 119, 6.8, 'fill="#8f8d83" stroke="#2a2a28" stroke-width=".6"');
    for (let d = 119.5; d < 122; d += 0.4) out += disc(a, cy, d, 6.5, 'fill="#918f86" stroke="#918f86" stroke-width=".5"');
    out += disc(a, cy, 122, 6.5, 'fill="#8a887f" stroke="#2a2a28" stroke-width=".5"');
    for (let d = 122.5; d < 129.5; d += 0.4) out += disc(a, cy, d, 7, 'fill="#0b0b0b" stroke="#0b0b0b" stroke-width=".5"');
    if (Math.cos(a) > 0.1) {
      out += disc(a, cy, 129.5, 5.6, 'fill="#333330" stroke="#65645e" stroke-width=".7"');
      out += disc(a, cy, 129.5, 2.9, 'fill="#1a1a19" stroke="#85847c" stroke-width=".8"');
      out += disc(a, cy, 129, 1.1, 'fill="#99978e"');
    }
    return out;
  }

  let back = "", front = "", inner = "";
  for (let i = 0; i < 26; i++) {
    const a = (-3.7 + i * STEP) * Math.PI / 180;
    const c = Math.cos(a);
    [216, 523.5].forEach(cy => {
      if (c > -0.02) front += bolt(a, cy);
      else if (c > -0.6) back += bolt(a, cy);
    });
    if (c < 0.1) {
      inner += disc(a, 216, 103, 5.3, 'fill="#111"');
      inner += disc(a, 216, 101.5, 5.3, 'fill="#111"');
      inner += disc(a, 216, 100.3, 4.5, 'fill="#77766e" stroke="#222" stroke-width=".4"');
    }
  }
  document.getElementById("backBolts").innerHTML = back;
  document.getElementById("frontBolts").innerHTML = front;
  document.getElementById("innerBolts").innerHTML = inner;
  </script>
</body>
</html>
